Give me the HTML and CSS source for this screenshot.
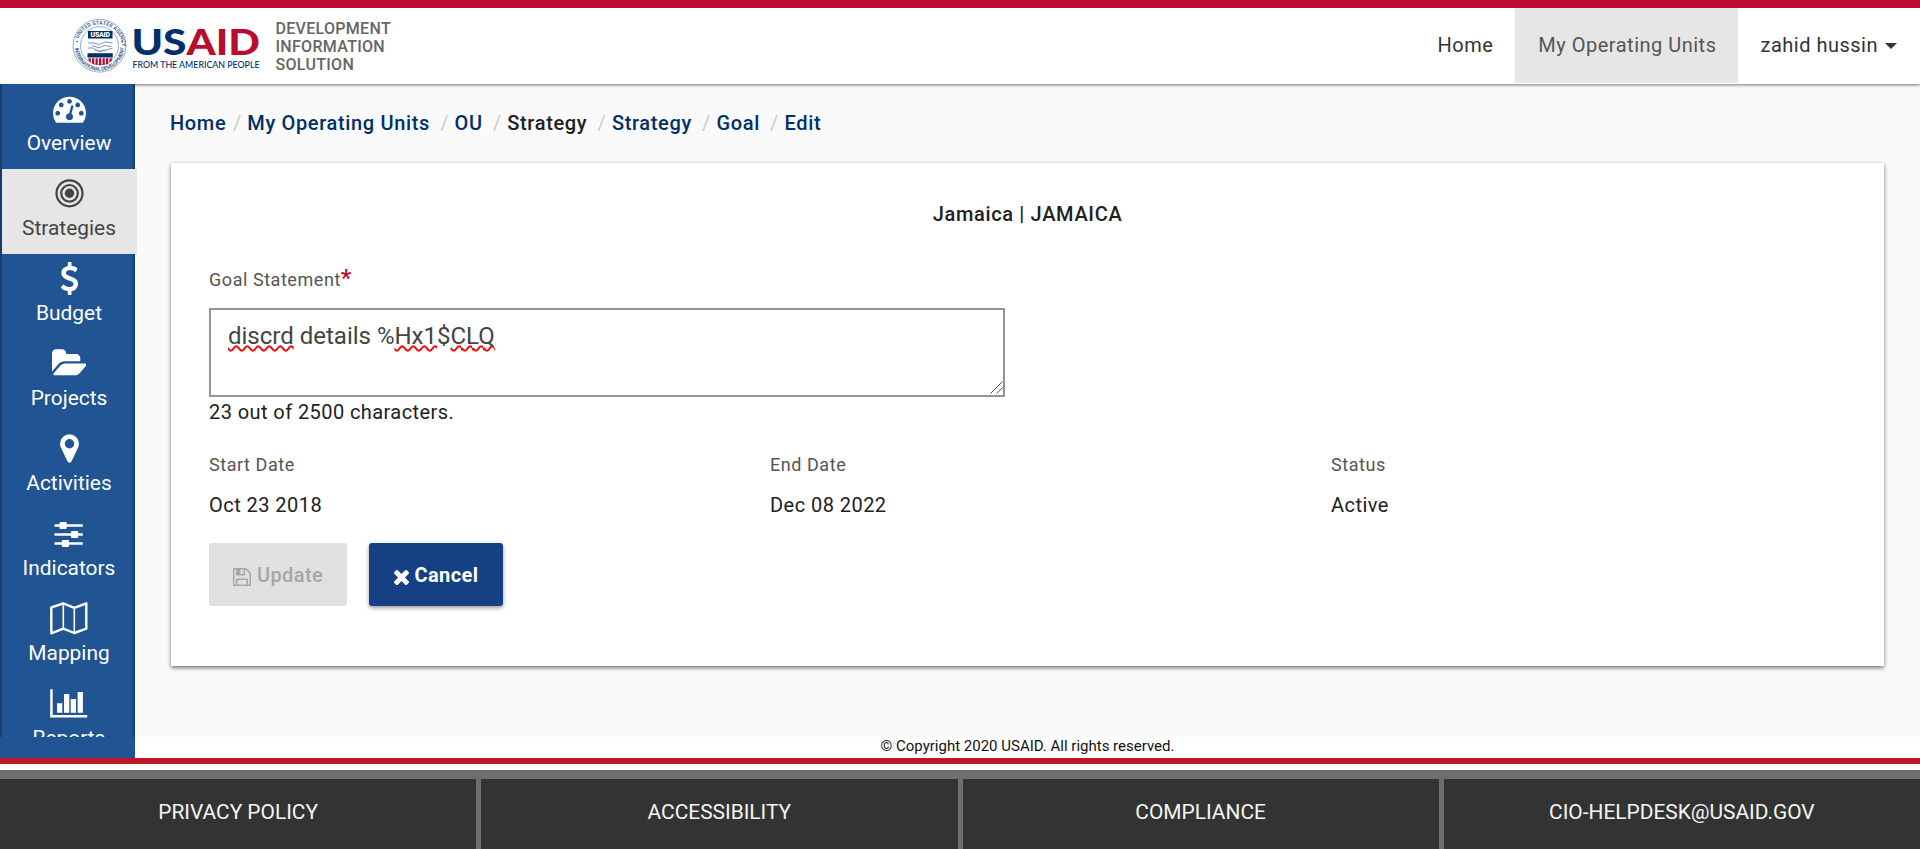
FILE: index.html
```html
<!DOCTYPE html>
<html lang="en">
<head>
<meta charset="utf-8">
<title>Edit Goal</title>
<link rel="stylesheet" href="styles.css">
</head>
<body>
<header class="header">
  <svg class="logo" viewBox="0 0 190 56" role="img" aria-label="USAID">
    <defs>
      <path id="arcTop" d="M5.300 34.500A22.800 22.800 0 1 1 49.700 34.500"/>
      <path id="arcBottom" d="M2.700 28A24.800 24.800 0 0 0 52.300 28"/>
    </defs>
    <circle class="seal-ring" cx="27.500" cy="27.700" r="26.400"/>
    <circle class="seal-ring" cx="27.500" cy="27.700" r="19"/>
    <text class="seal-text"><textPath href="#arcTop" startOffset="14" textLength="62">UNITED STATES AGENCY</textPath></text>
    <text class="seal-text"><textPath href="#arcBottom" startOffset="2" textLength="74">INTERNATIONAL DEVELOPMENT</textPath></text>
    <circle class="seal-dot" cx="5" cy="23.500" r=".8"/>
    <circle class="seal-dot" cx="50" cy="23.500" r=".8"/>
    <rect class="navy" x="16" y="13" width="24.500" height="7.500"/>
    <text class="seal-name" x="18.500" y="19.200" textLength="19.500">USAID</text>
    <g class="hands"><path d="M16 25h6l5 1.500 6-2.500 7.500 1M16 30h5l6 3.500 6-1 7.500-2.500M20 27.500l7 2.500 5-2.500 7 1M23 31.800l5 1.500 5-1.500"/></g>
    <path class="navy" d="M15.500 35.200h25.300v4.300h-25.300z"/>
    <path class="red" d="M16.500 40.300h2.300v4.200l-2.300-2zM20 40.300h2.300v6.500l-2.300-1.500zM23.500 40.300h2.300v6.500h-2.300zM27 40.300h2.300v7h-2.300zM30.500 40.300h2.300v6.500h-2.300zM34 40.300h2.300v5.500l-2.300 1zM37.500 40.300h2.300v2.500l-2.300 1.700z"/>
    <text class="word navy" x="59.500" y="37" textLength="55" lengthAdjust="spacingAndGlyphs">US</text>
    <text class="word red" x="114.500" y="37" textLength="73.500" lengthAdjust="spacingAndGlyphs">AID</text>
    <text class="tagline navy" x="60.500" y="49.700" textLength="127" lengthAdjust="spacingAndGlyphs">FROM THE AMERICAN PEOPLE</text>
  </svg>
  <div class="product">DEVELOPMENT<br>INFORMATION<br>SOLUTION</div>
  <nav class="topnav">
    <a class="topnav-item">Home</a>
    <a class="topnav-item topnav-active">My Operating Units</a>
    <a class="topnav-item topnav-user">zahid hussin<span class="caret"></span></a>
  </nav>
</header>

<div class="body">
  <aside class="sidebar">
    <a class="side-item"><svg class="side-icon" viewBox="0 0 1792 1792"><path d="M384 1152q0-53-37.500-90.500t-90.500-37.500-90.500 37.500-37.500 90.500 37.500 90.500 90.500 37.500 90.500-37.500 37.500-90.500zm192-448q0-53-37.500-90.500t-90.500-37.500-90.500 37.500-37.500 90.500 37.500 90.500 90.500 37.500 90.500-37.500 37.500-90.500zm428 481l101-382q6-26-7.500-48.500t-38.500-29.500-48 6.500-30 39.500l-101 382q-60 5-107 43.500t-63 98.500q-20 77 20 146t117 89 146-20 89-117q16-60-6-117t-72-91zm660-33q0-53-37.500-90.500t-90.500-37.500-90.500 37.500-37.500 90.500 37.500 90.500 90.500 37.500 90.500-37.500 37.500-90.500zm-640-640q0-53-37.500-90.500t-90.500-37.500-90.500 37.500-37.500 90.500 37.500 90.500 90.500 37.500 90.500-37.500 37.500-90.500zm448 192q0-53-37.500-90.500t-90.500-37.500-90.500 37.500-37.500 90.500 37.500 90.500 90.500 37.500 90.500-37.500 37.500-90.500zm320 448q0 261-141 483-19 29-54 29h-1402q-35 0-54-29-141-221-141-483 0-182 71-348t191-286 286-191 348-71 348 71 286 191 191 286 71 348z"/></svg><span>Overview</span></a>
    <a class="side-item side-active"><svg class="side-icon" viewBox="0 0 33 33"><g class="rings"><circle cx="16.500" cy="16.300" r="13"/><circle cx="16.500" cy="16.300" r="8.300"/></g><circle cx="16.500" cy="16.300" r="4.700"/></svg><span>Strategies</span></a>
    <a class="side-item"><svg class="side-icon" viewBox="0 0 1792 1792"><path d="M1362 1185q0 153-99.500 263.500t-258.500 136.500v175q0 14-9 23t-23 9h-135q-13 0-22.500-9.500t-9.500-22.500v-175q-66-9-127.500-31t-101.500-44.500-74-48-46.500-37.500-17.500-18q-17-21-2-41l103-135q7-10 23-12 15-2 24 9l2 2q113 99 243 125 37 8 74 8 81 0 142.500-43t61.500-122q0-28-15-53t-33.500-42-58.500-37.500-66-32-80-32.500q-39-16-61.500-25t-61.500-26.500-62.500-31-56.500-35.500-53.500-42.500-43.500-49-35.500-58-21-66.500-8.500-78q0-138 98-242t255-134v-180q0-13 9.500-22.500t22.500-9.500h135q14 0 23 9t9 23v176q57 6 110.500 23t87 33.500 63.500 37.500 39 29 15 14q17 18 5 38l-81 146q-8 15-23 16-14 3-27-7-3-3-14.500-12t-39-26.500-58.500-32-74.500-26-85.500-11.500q-95 0-155 43t-60 111q0 26 8.500 48t29.500 41.500 39.500 33 56 31 60.500 27 70 27.500q53 20 81 31.500t76 35 75.500 42.500 62 50 53 63.500 31.500 76.500 13 94z"/></svg><span>Budget</span></a>
    <a class="side-item"><svg class="side-icon side-icon-folder" viewBox="0 0 1879 1792"><path d="M1879 952q0 31-31 66l-336 396q-43 51-120.500 86.500t-143.500 35.500h-1088q-34 0-60.500-13t-26.500-43q0-31 31-66l336-396q43-51 120.500-86.500t143.500-35.500h1088q34 0 60.500 13t26.500 43zm-343-344v160h-832q-94 0-197 47.500t-164 119.500l-337 396-5 6q0-4-.5-12.500t-.5-12.500v-960q0-92 66-158t158-66h320q92 0 158 66t66 158v32h544q92 0 158 66t66 158z"/></svg><span>Projects</span></a>
    <a class="side-item"><svg class="side-icon" viewBox="0 0 1792 1792"><path d="M1152 640q0-106-75-181t-181-75-181 75-75 181 75 181 181 75 181-75 75-181zm256 0q0 109-33 179l-364 774q-16 33-47.500 52t-67.500 19-67.500-19-46.500-52l-365-774q-33-70-33-179 0-212 150-362t362-150 362 150 150 362z"/></svg><span>Activities</span></a>
    <a class="side-item"><svg class="side-icon side-icon-wide" viewBox="0 0 40 33"><path d="M5.500 7.300h28.300v2.500h-28.300zM5.500 16.200h28.300v2.500h-28.300zM5.500 25.300h28.300v2.500h-28.300z"/><rect x="10.500" y="5" width="7.200" height="7" rx="1"/><rect x="22" y="14" width="7.200" height="7" rx="1"/><rect x="12.800" y="23" width="7.200" height="7" rx="1"/></svg><span>Indicators</span></a>
    <a class="side-item"><svg class="side-icon side-icon-wide" viewBox="0 0 40 33"><path class="map-edge" d="M2.300 5.500L14.300 1.300 25.300 5.800 37.300 1.300V26.700L25.300 31 14.300 26.700 2.300 31.300z"/><path class="map-fold" d="M14.300 2V26.500M25.300 6V31"/></svg><span>Mapping</span></a>
    <a class="side-item"><svg class="side-icon side-icon-wide" viewBox="0 0 40 33"><path d="M1.200 2.300h2.500v25.700h34.500v2.400h-37zM8 16.300h5.300v9.500h-5.300zM15 7h5.300v18.800h-5.300zM21.700 12h5.300v13.800h-5.300zM28.600 5h5.300v20.800h-5.300z"/></svg><span>Reports</span></a>
  </aside>
  <main class="main">
    <ol class="crumbs">
      <li class="crumb">Home</li>
      <li class="crumb">My Operating Units</li>
      <li class="crumb">OU</li>
      <li class="crumb crumb-plain">Strategy</li>
      <li class="crumb">Strategy</li>
      <li class="crumb">Goal</li>
      <li class="crumb">Edit</li>
    </ol>
    <section class="card">
      <h1 class="card-title">Jamaica | JAMAICA</h1>
      <div class="label goal-label">Goal Statement<span class="required">*</span></div>
      <div class="textbox"><span class="misspelt">discrd</span> details %<span class="misspelt">Hx1</span>$<span class="misspelt">CLQ</span>
        <svg class="grip" viewBox="0 0 13 13"><path d="M.5 12.500L12.500.5M6.500 12.500L12.500 6.500"/></svg>
      </div>
      <div class="counter">23 out of 2500 characters.</div>
      <div class="facts">
        <div><div class="label">Start Date</div><div class="value">Oct 23 2018</div></div>
        <div><div class="label">End Date</div><div class="value">Dec 08 2022</div></div>
        <div><div class="label">Status</div><div class="value">Active</div></div>
      </div>
      <div class="actions">
        <button class="btn btn-disabled" disabled><svg class="btn-save" viewBox="128 128 1536 1536"><path d="M512 1536h768v-384h-768v384zm896 0h128v-896q0-14-10-38.500t-20-34.500l-281-281q-10-10-34-20t-39-10v416q0 40-28 68t-68 28h-576q-40 0-68-28t-28-68v-416h-128v1280h128v-416q0-40 28-68t68-28h832q40 0 68 28t28 68v416zm-384-928v-320q0-13-9.500-22.500t-22.500-9.500h-192q-13 0-22.500 9.500t-9.500 22.500v320q0 13 9.500 22.500t22.500 9.500h192q13 0 22.500-9.500t9.500-22.500zm640 32v928q0 40-28 68t-68 28h-1344q-40 0-68-28t-28-68v-1344q0-40 28-68t68-28h928q40 0 88 20t76 48l280 280q28 28 48 76t20 88z"/></svg><span>Update</span></button>
        <button class="btn btn-primary"><svg class="btn-x" viewBox="302 366 1188 1188"><path d="M1490 1322q0 40-28 68l-136 136q-28 28-68 28t-68-28l-294-294-294 294q-28 28-68 28t-68-28l-136-136q-28-28-28-68t28-68l294-294-294-294q-28-28-28-68t28-68l136-136q28-28 68-28t68 28l294 294 294-294q28-28 68-28t68 28l136 136q28 28 28 68t-28 68l-294 294 294 294q28 28 28 68z"/></svg><span>Cancel</span></button>
      </div>
    </section>
  </main>
</div>

<div class="copyright"><div class="copyright-side"></div><div class="copyright-text">© Copyright 2020 USAID. All rights reserved.</div></div>
<footer class="footer">
  <a class="footer-link">PRIVACY POLICY</a>
  <a class="footer-link">ACCESSIBILITY</a>
  <a class="footer-link">COMPLIANCE</a>
  <a class="footer-link">CIO-HELPDESK@USAID.GOV</a>
</footer>
</body>
</html>
```
FILE: styles.css
```css
* { box-sizing: border-box; }
html { overflow: hidden; }
body {
  margin: 0;
  height: 849px;
  display: flex;
  flex-direction: column;
  overflow: hidden;
  background: #fff;
  color: #212121;
  font-family: Roboto, "Liberation Sans", sans-serif;
  font-size: 20px;
}
.header {
  height: 84px;
  flex: none;
  display: flex;
  align-items: flex-start;
  border-top: 8px solid #ba0c2f;
  background: #fff;
  box-shadow: 0 1px 3px rgba(0,0,0,.55);
  position: relative;
}
.logo { width: 190px; height: 56px; margin: 10px 0 0 71.5px; flex: none; overflow: visible; }
.seal-ring { fill: none; stroke: #7d95ba; stroke-width: .8; }
.seal-text { font-size: 5.4px; font-weight: 700; fill: #4869a0; }
.seal-dot { fill: #31568f; }
.seal-name { font-size: 7px; font-weight: 900; fill: #fff; }
.hands { fill: none; stroke: #6f8ab3; stroke-width: .9; }
.navy { fill: #002f6c; }
.red { fill: #ba0c2f; }
.word { font-family: Lato, sans-serif; font-weight: 900; font-size: 36.5px; }
.tagline { font-family: Lato, sans-serif; font-size: 9.4px; font-weight: 500; }
.product { margin: 12px 0 0 14px; font-size: 16px; line-height: 18px; font-weight: 500; color: #666; letter-spacing: .3px; }
.topnav { margin-left: auto; display: flex; letter-spacing: .5px; }
.topnav-item { height: 75px; padding: 0 22px 0 23px; line-height: 74px; color: #333; white-space: nowrap; }
.topnav-active { background: #e6e6e6; color: #555; }
.topnav-user { display: flex; align-items: flex-start; padding: 0 23px 0 22px; }
.caret { margin: 35px 0 0 7px; border: 6px solid transparent; border-top-color: #333; border-bottom: 0; }
.body { height: 653px; flex: none; display: flex; }
.sidebar {
  width: 135px;
  flex: none;
  background: #205493;
  border: solid #173d6d;
  border-width: 0 2px;
  position: relative;
  clip-path: inset(0 -2px 0 0);
}
.side-item {
  width: 135px;
  height: 85px;
  padding: 8px 1px 0 0;
  display: flex;
  flex-direction: column;
  align-items: center;
  gap: 6px;
  line-height: 24px;
  font-size: 20.9px;
  color: #fff;
}
.side-active { background: #e6e6e6; color: #444; }
.side-icon { width: 33px; height: 33px; fill: currentColor; flex: none; }
.side-icon-folder { width: 34.6px; }
.side-icon-wide { width: 40px; }
.rings { fill: none; stroke: currentColor; stroke-width: 2.2; }
.map-edge { fill: none; stroke: currentColor; stroke-width: 2.4; stroke-linejoin: round; }
.map-fold { fill: none; stroke: currentColor; stroke-width: 1.6; }
.main { flex: 1; background: #fafafa; padding: 25px 36px 0 35px; }
.crumbs { margin: 0; padding: 0; height: 54px; display: flex; list-style: none; line-height: 28px; font-weight: 500; color: #002f6c; letter-spacing: .65px; }
.crumb + .crumb::before { content: "/"; color: #ccc; font-weight: 400; padding: 0 5.5px 0 10.2px; }
.crumb:nth-child(2)::before { padding-left: 6.6px; }
.crumb-plain { color: #212121; }
.card { margin-left: 1px; height: 503px; padding: 37px 38px 0; background: #fff; box-shadow: 0 2px 4px rgba(0,0,0,.5), 0 0 3px rgba(0,0,0,.1); }
.card-title { margin: 0; text-align: center; font-size: 20px; font-weight: 500; line-height: 28px; letter-spacing: .66px; }
.label { font-size: 18px; line-height: 24px; color: #555; letter-spacing: .55px; }
.goal-label { margin-top: 40px; display: flex; }
.required { color: #ba0c2f; font-size: 24px; font-weight: 500; line-height: 20px; }
.textbox { position: relative; margin-top: 16px; width: 796px; height: 89px; border: 2px solid #949494; padding: 11px 17px; font-size: 24px; line-height: 30px; color: #444; white-space: nowrap; }
.misspelt { text-decoration: underline wavy #f00 1.7px; text-underline-offset: 1px; text-decoration-skip-ink: none; }
.grip { position: absolute; right: 0; bottom: 1px; width: 13px; height: 13px; fill: none; stroke: #555; stroke-width: 1; }
.counter { margin-top: 3px; line-height: 24px; letter-spacing: .42px; }
.facts { margin-top: 29px; display: grid; grid-template-columns: 561px 561px 1fr; }
.value { margin-top: 16px; line-height: 24px; letter-spacing: .45px; }
.actions { margin-top: 26px; display: flex; gap: 22px; }
.btn { height: 63px; border: 0; border-radius: 3px; padding: 0; display: flex; align-items: center; justify-content: center; gap: 6px; font: 500 20px Roboto, sans-serif; letter-spacing: .4px; }
.btn-disabled { width: 138px; background: #e0e0e0; color: #a6a6a6; }
.btn-primary { width: 134px; background: #154084; color: #fff; font-weight: 700; box-shadow: 0 2px 4px rgba(0,0,0,.4); }
.btn-save { width: 18px; height: 18px; margin-top: 4px; fill: currentColor; }
.btn-x { width: 15px; height: 15px; margin-top: 5px; fill: currentColor; }
.copyright { height: 21px; flex: none; display: flex; }
.copyright-side { width: 135px; background: #205493; }
.copyright-text { flex: 1; text-align: center; font-size: 15px; line-height: 19px; color: #111; }
.footer { height: 91px; flex: none; display: grid; grid-template-columns: repeat(4, 1fr); column-gap: 5px; border-top: 6px solid #bb1729; background: linear-gradient(#fff 6px, #6e6e6e 6px); padding-top: 15px; }
.footer-link { background: #333; color: #f5f5f5; text-align: center; font-size: 20.9px; line-height: 66px; }
```
